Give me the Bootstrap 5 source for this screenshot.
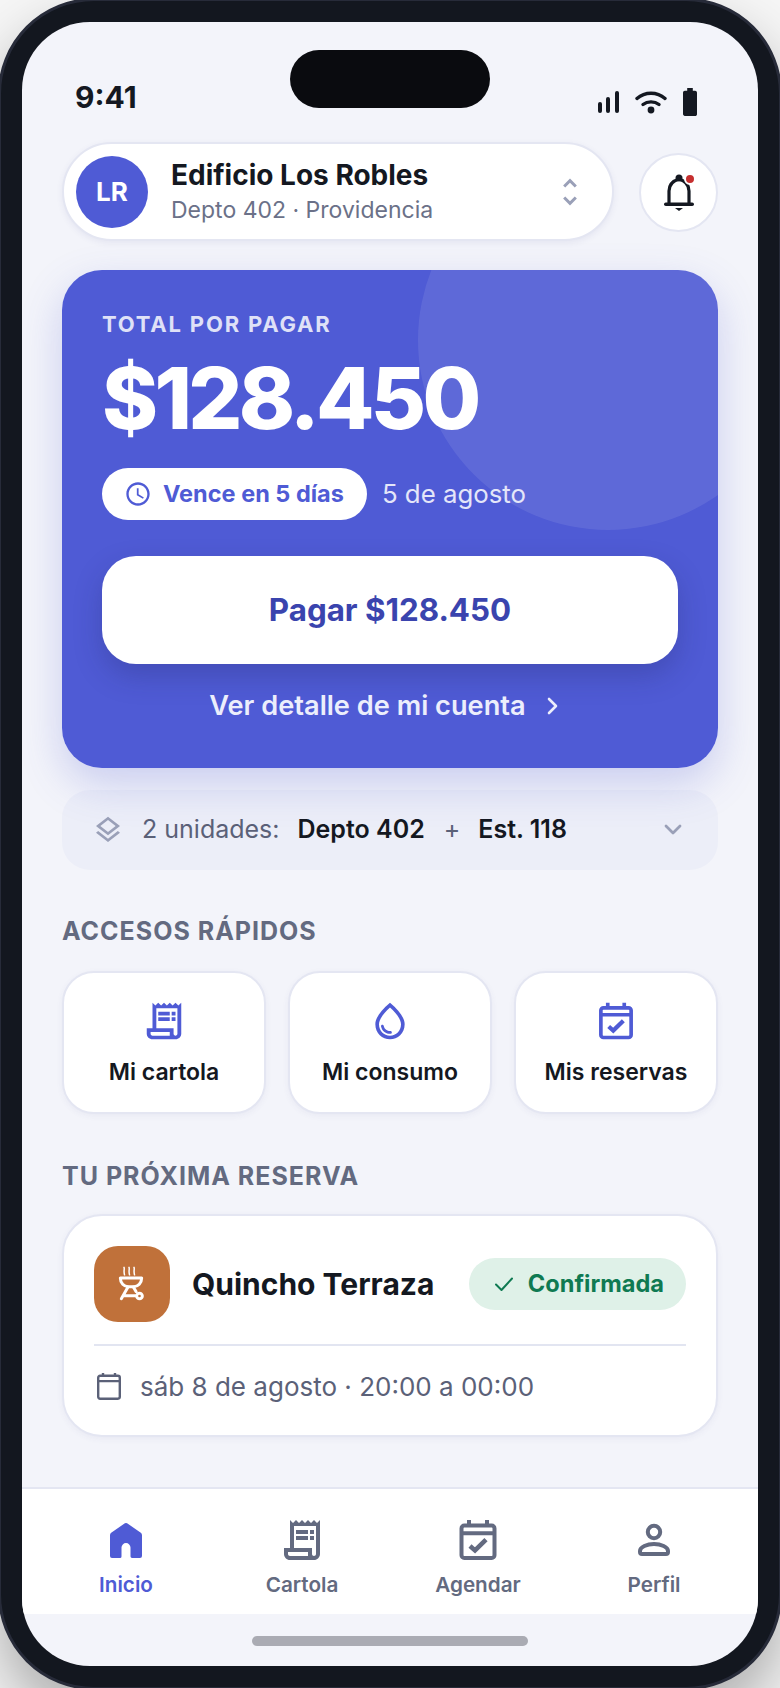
<!DOCTYPE html>
<html lang="es">
<head>
  <meta charset="UTF-8">
  <meta name="viewport" content="width=device-width, initial-scale=1">
  <title>Edificio Los Robles</title>
  <link href="https://cdn.jsdelivr.net/npm/bootstrap@5.3.0/dist/css/bootstrap.min.css" rel="stylesheet">
  <style>
    html, body { margin: 0; height: 1688px; overflow: hidden; background: #f6f6f6; }
    body { font-family: Inter, "Noto Sans", sans-serif; color: #141821; }

    /* marco del telefono */
    .phone-frame { width: 784px; height: 1692px; margin: -2px; padding: 21px; background: #13171f; border: 3px solid #272b39; border-radius: 96px; box-shadow: 0 30px 60px rgba(0,0,0,.3); }
    .phone-screen { position: relative; height: 100%; border-radius: 68px; background: #f3f4fa; overflow: hidden; }
    .island { position: absolute; top: 28px; left: 268px; width: 200px; height: 58px; border-radius: 29px; background: #0a0b0f; }

    .status-row { height: 120px; padding: 57px 61px 0 53px; }
    .status-time { font-size: 30px; line-height: 36px; font-weight: 700; }
    .status-icons { margin-top: 9px; gap: 16px; }

    .page-body { padding: 0 40px; }

    /* selector de edificio */
    .building-pill { height: 99px; padding: 0 24px 0 12px; background: #fff; border: 2px solid #e4e6f2; border-radius: 50px; box-shadow: 0 2px 6px rgba(60,70,140,.08); }
    .avatar-lr { width: 72px; height: 72px; margin-right: 23px; border-radius: 50%; background: #4f5bd5; color: #fff; font-size: 26px; font-weight: 700; }
    .building-name { font-size: 28px; line-height: 34px; font-weight: 700; }
    .building-sub { margin-top: 2px; font-size: 23px; line-height: 32px; color: #6b7188; }
    .bell-btn { position: relative; width: 79px; height: 79px; margin-left: 25px; margin-top: 11px; background: #fff; border: 2px solid #e4e6f2; border-radius: 50%; }
    .bell-dot { position: absolute; top: 18px; right: 20px; width: 8px; height: 8px; border-radius: 50%; background: #c62f2f; box-sizing: content-box; border: 2px solid #fff; }

    /* tarjeta total */
    .total-card { position: relative; margin-top: 29px; padding: 41px 40px 45px; overflow: visible; background: #4f5bd5; color: #fff; border: 0; border-radius: 40px; box-shadow: 0 16px 40px rgba(79,91,213,.25); }
    .total-clip { position: absolute; inset: 0; border-radius: 40px; overflow: hidden; }
    .total-circle { position: absolute; top: -120px; right: -80px; width: 380px; height: 380px; border-radius: 50%; background: rgba(255,255,255,.09); }
    .total-inner { position: relative; }
    .total-label { font-size: 22px; line-height: 26px; font-weight: 700; letter-spacing: 1.8px; color: #dfe1f7; }
    .total-amount { margin-top: 17px; font-size: 85px; line-height: 90px; font-weight: 800; letter-spacing: -3.7px; }
    .due-pill { height: 52px; padding: 0 23px 0 22px; background: #fff; color: #4f5bd5; font-size: 23.5px; font-weight: 700; border-radius: 26px; gap: 11px; }
    .due-date { margin-left: 15px; font-size: 25.8px; color: #e4e6f9; }
    .pay-btn { display: block; width: 100%; height: 108px; margin-top: 36px; background: #fff; color: #3a44ae; font-size: 31.3px; font-weight: 700; border: 0; border-radius: 34px; box-shadow: 0 12px 28px rgba(30,35,90,.25); }
    .pay-btn:hover { background: #fff; color: #3a44ae; }
    .detail-link { margin-top: 25px; height: 34px; padding-right: 11px; gap: 20px; font-size: 27.2px; font-weight: 600; color: #eceefc; text-decoration: none; }

    /* unidades */
    .units-bar { height: 80px; margin-top: 22px; padding: 0 35px 0 30px; background: #eceef8; border-radius: 28px; font-size: 25px; color: #5b6178; }
    .units-bar b { font-weight: 600; color: #141821; }
    .unit-count { margin-left: 18px; }
    .unit-main { margin-left: 18px; }
    .unit-plus { margin: 0 18px 0 19px; }

    .block-title { margin: 46px 0 25px; font-size: 25px; line-height: 30px; font-weight: 700; letter-spacing: 1px; color: #636a80; }
    .block-title.next { margin: 47px 0 23px; }

    /* accesos */
    .quick-row { gap: 22px; }
    .quick-item { flex: 1 1 0; padding: 26px 0 25px; align-items: center; background: #fff; border: 2px solid #e4e6f2; border-radius: 32px; box-shadow: 0 2px 6px rgba(60,70,140,.06); }
    .quick-item span { margin-top: 14px; font-size: 23px; line-height: 30px; font-weight: 600; }

    /* reserva */
    .booking-card { padding: 30px 30px 32px; background: #fff; border: 2px solid #e4e6f2; border-radius: 40px; box-shadow: 0 2px 6px rgba(60,70,140,.06); }
    .grill-box { width: 76px; height: 76px; border-radius: 24px; background: #c0713a; }
    .booking-name { margin-left: 22px; font-size: 30px; font-weight: 700; }
    .booking-state { height: 52px; padding: 0 22px 0 25px; gap: 14px; background: #dff1e8; color: #0f7a52; font-size: 23.6px; font-weight: 700; border-radius: 26px; }
    .booking-line { height: 2px; margin: 22px 0 25px; background: #e2e5f1; }
    .booking-date { gap: 15px; font-size: 26px; line-height: 32px; color: #5b6178; }

    /* barra inferior */
    .tab-bar { height: 127px; padding: 27px 16px 0; background: #fff; border-top: 2px solid #e4e6f2; }
    .tab-item { flex: 1 1 0; gap: 8px; align-items: center; font-size: 20.7px; line-height: 26px; font-weight: 600; color: #636a80; text-decoration: none; }
    .tab-item.on { color: #4f5bd5; }
    .home-zone { height: 52px; padding-top: 22px; }
    .home-bar { width: 276px; height: 10px; border-radius: 5px; background: #aaabb3; }

    .fg-brand { fill: #4f5bd5; }
    .fg-gray { fill: #636a80; }
    .fg-soft { fill: #9aa0b8; }
    .fg-dark { fill: #141821; }
  </style>
</head>
<body>

  <div class="phone-frame">
    <div class="phone-screen d-flex flex-column">
      <div class="island"></div>

      <!-- Barra de estado -->
      <div class="status-row d-flex justify-content-between align-items-start">
        <div class="status-time">9:41</div>
        <div class="status-icons d-flex align-items-center">
          <svg width="21" height="22" viewBox="0 0 21 22"><rect x="0" y="11" width="4" height="11" rx="2" class="fg-dark"/><rect x="8" y="6" width="4" height="16" rx="2" class="fg-dark"/><rect x="17" y="0" width="4" height="22" rx="2" class="fg-dark"/></svg>
          <svg width="32" height="24" viewBox="0 0 32 24" fill="none" stroke="#141821" stroke-width="3.4" stroke-linecap="round"><path d="M2 8.500C10 1.500 22 1.500 30 8.500"/><path d="M8 14.500C12.500 11 19.500 11 24 14.500"/><circle cx="16" cy="20" r="3.400" fill="#141821" stroke="none"/></svg>
          <svg width="14" height="28" viewBox="7 2 10 20" preserveAspectRatio="none"><path class="fg-dark" d="M15.67 4H14V2h-4v2H8.33C7.6 4 7 4.6 7 5.33v15.33C7 21.4 7.6 22 8.33 22h7.33c.74 0 1.34-.6 1.34-1.33V5.33C17 4.6 16.4 4 15.67 4z"/></svg>
        </div>
      </div>

      <div class="page-body">
        <!-- Selector de edificio -->
        <div class="d-flex align-items-start">
          <div class="building-pill flex-grow-1 d-flex align-items-center">
            <div class="avatar-lr d-flex align-items-center justify-content-center">LR</div>
            <div class="flex-grow-1">
              <div class="building-name">Edificio Los Robles</div>
              <div class="building-sub">Depto 402 · Providencia</div>
            </div>
            <svg width="36" height="36" viewBox="0 0 24 24"><path class="fg-soft" d="M12 5.83L15.17 9l1.41-1.41L12 3 7.41 7.59 8.83 9 12 5.83zm0 12.34L8.83 15l-1.42 1.41L12 21l4.59-4.59L15.17 15 12 18.17z"/></svg>
          </div>
          <div class="bell-btn d-flex align-items-center justify-content-center flex-shrink-0">
            <svg width="30" height="37" viewBox="0 0 30 37"><path d="M5 29V17c0-6 3.500-10 10-12 6.500 2 10 6 10 12v12" fill="none" stroke="#141821" stroke-width="3.200"/><circle cx="15" cy="4" r="3.500" class="fg-dark"/><rect x="0" y="28.500" width="30" height="3.600" rx="1.800" class="fg-dark"/><path class="fg-dark" d="M11 34h8l-4 3z"/></svg>
            <span class="bell-dot"></span>
          </div>
        </div>

        <!-- Total por pagar -->
        <div class="card total-card">
          <div class="total-clip"><div class="total-circle"></div></div>
          <div class="total-inner">
            <div class="total-label">TOTAL POR PAGAR</div>
            <div class="total-amount">$128.450</div>
            <div class="d-flex align-items-center mt-4">
              <div class="due-pill d-inline-flex align-items-center">
                <svg width="28" height="28" viewBox="0 0 24 24"><path class="fg-brand" d="M11.99 2C6.47 2 2 6.48 2 12s4.47 10 9.99 10C17.52 22 22 17.52 22 12S17.52 2 11.99 2zM12 20c-4.42 0-8-3.58-8-8s3.58-8 8-8 8 3.58 8 8-3.58 8-8 8zm.5-13H11v6l5.25 3.15.75-1.23-4.5-2.67z"/></svg>
                Vence en 5 días
              </div>
              <div class="due-date">5 de agosto</div>
            </div>
            <button type="button" class="btn pay-btn">Pagar $128.450</button>
            <a href="#" class="detail-link d-flex align-items-center justify-content-center">
              Ver detalle de mi cuenta
              <svg width="14" height="20" viewBox="0 0 14 20" fill="none" stroke="#eceefc" stroke-width="2.6" stroke-linecap="round" stroke-linejoin="round"><path d="M3 3l7 7-7 7"/></svg>
            </a>
          </div>
        </div>

        <!-- Unidades -->
        <div class="units-bar d-flex align-items-center">
          <svg width="32" height="32" viewBox="0 0 24 24"><path class="fg-soft" d="M11.99 18.54l-7.37-5.73L3 14.07l9 7 9-7-1.63-1.27-7.38 5.74zM12 16l7.36-5.73L21 9l-9-7-9 7 1.63 1.27L12 16zm0-11.47L17.74 9 12 13.47 6.26 9 12 4.53z"/></svg>
          <span class="unit-count">2 unidades:</span>
          <b class="unit-main">Depto 402</b>
          <span class="unit-plus">+</span>
          <b>Est. 118</b>
          <svg class="ms-auto" width="20" height="12" viewBox="0 0 20 12" fill="none" stroke="#9aa0b8" stroke-width="2.8" stroke-linecap="round" stroke-linejoin="round"><path d="M3 2l7 7 7-7"/></svg>
        </div>

        <div class="block-title">ACCESOS RÁPIDOS</div>
        <div class="quick-row d-flex">
          <a class="quick-item d-flex flex-column text-decoration-none text-reset" href="#">
            <svg width="46" height="44" viewBox="0 0 24 24" preserveAspectRatio="none"><path class="fg-brand" d="M19.5 3.5L18 2l-1.5 1.5L15 2l-1.5 1.5L12 2l-1.5 1.5L9 2L7.5 3.5L6 2v14H3v3c0 1.66 1.34 3 3 3h12c1.66 0 3-1.34 3-3V2l-1.5 1.5zM15 20H6c-.55 0-1-.45-1-1v-1h10v2zm4-1c0 .55-.45 1-1 1s-1-.45-1-1v-3H8V5h11v14z"/><path class="fg-brand" d="M9 7h6v2H9zM16 7h2v2h-2zM9 10h6v2H9zM16 10h2v2h-2z"/></svg>
            <span>Mi cartola</span>
          </a>
          <a class="quick-item d-flex flex-column text-decoration-none text-reset" href="#">
            <svg width="44" height="44" viewBox="0 0 24 24"><path class="fg-brand" d="M12 2c-5.33 4.55-8 8.48-8 11.8 0 4.98 3.8 8.2 8 8.2s8-3.22 8-8.2c0-3.32-2.67-7.25-8-11.8zm0 18c-3.35 0-6-2.57-6-6.2 0-2.34 1.95-5.44 6-9.14 4.05 3.7 6 6.79 6 9.14 0 3.63-2.65 6.2-6 6.2zm-4.17-6c.37 0 .67.26.74.62.41 2.22 2.28 2.98 3.64 2.87.43-.02.79.32.79.75 0 .4-.32.73-.72.75-2.13.13-4.62-1.09-5.19-4.12-.08-.45.28-.87.74-.87z"/></svg>
            <span>Mi consumo</span>
          </a>
          <a class="quick-item d-flex flex-column text-decoration-none text-reset" href="#">
            <svg width="44" height="44" viewBox="0 0 24 24" fill="none" stroke="#4f5bd5" stroke-width="2"><rect x="3.750" y="4.800" width="16.500" height="16.200" rx="1.400"/><path d="M3.750 8.600h16.500M7.500 5V2M16.500 5V2"/><path stroke-width="2.300" d="M8 15l2.500 2.200L16 11.800"/></svg>
            <span>Mis reservas</span>
          </a>
        </div>

        <div class="block-title next">TU PRÓXIMA RESERVA</div>
        <div class="booking-card">
          <div class="d-flex align-items-center">
            <div class="grill-box d-flex align-items-center justify-content-center flex-shrink-0">
              <svg width="40" height="40" viewBox="0 0 24 24" fill="none" stroke="#fff" stroke-width="1.800" stroke-linecap="round" stroke-linejoin="round">
                <path stroke-width=".9" d="M7.200 2c.5 1.100-.4 1.800.3 4.500M10.200 2c.5 1.100-.4 1.800.3 4.500M13.200 2c.5 1.100-.4 1.800.3 4.500"/>
                <path d="M5 8.400h12.800c0 3-2.200 5.200-4.800 5.200h-3.200c-2.600 0-4.800-2.200-4.800-5.200z"/>
                <path d="M9.600 13.800L5.600 20.800M7 19h7M12.800 13.800l1.700 2.800"/>
                <circle cx="16.500" cy="19.200" r="1.700"/>
              </svg>
            </div>
            <div class="booking-name">Quincho Terraza</div>
            <div class="booking-state d-flex align-items-center ms-auto">
              <svg width="20" height="16" viewBox="0 0 20 16" fill="none" stroke="#0f7a52" stroke-width="2" stroke-linecap="round" stroke-linejoin="round"><path d="M2 8.500l5.500 5.500L18 2.500"/></svg>
              Confirmada
            </div>
          </div>
          <div class="booking-line"></div>
          <div class="booking-date d-flex align-items-center">
            <svg width="32" height="32" viewBox="0 0 24 24" fill="none" stroke="#5b6178" stroke-width="1.800" style="margin-left:-1px"><rect x="3.900" y="3.600" width="16.200" height="17.200" rx="1.400"/><path d="M3.900 7.600h16.200M7.500 3.600V1.500M16.500 3.600V1.500"/></svg>
            sáb 8 de agosto · 20:00 a 00:00
          </div>
        </div>
      </div>

      <!-- Barra inferior -->
      <div class="mt-auto">
        <nav class="tab-bar d-flex">
          <a class="tab-item on d-flex flex-column" href="#">
            <svg width="48" height="48" viewBox="0 0 24 24"><path class="fg-brand" d="M10.900 4a1.600 1.600 0 0 1 2.200 0L19.400 8.400c.4.3.6.7.6 1.200V20a1 1 0 0 1-1 1h-4a.8.8 0 0 1-.75-.75V15.800a2.250 2.250 0 0 0-4.500 0v4.450a.75.75 0 0 1-.75.75H5a1 1 0 0 1-1-1V9.600c0-.5.2-.9.6-1.200z"/></svg>
            Inicio
          </a>
          <a class="tab-item d-flex flex-column" href="#">
            <svg width="48" height="48" viewBox="0 0 24 24"><path class="fg-gray" d="M19.500 3.500L18 2l-1.500 1.500L15 2l-1.500 1.500L12 2l-1.500 1.500L9 2L7.500 3.500L6 2v14H3v3c0 1.660 1.340 3 3 3h12c1.660 0 3-1.340 3-3V2l-1.500 1.500zM15 20H6c-.55 0-1-.45-1-1v-1h10v2zm4-1c0 .55-.45 1-1 1s-1-.45-1-1v-3H8V5h11v14z"/><path class="fg-gray" d="M9 7h6v2H9zM16 7h2v2h-2zM9 10h6v2H9zM16 10h2v2h-2z"/></svg>
            Cartola
          </a>
          <a class="tab-item d-flex flex-column" href="#">
            <svg width="48" height="48" viewBox="0 0 24 24" fill="none" stroke="#636a80" stroke-width="2"><rect x="3.750" y="4.800" width="16.500" height="16.200" rx="1.400"/><path d="M3.750 8.600h16.500M7.500 5V2M16.500 5V2"/><path stroke-width="2.300" d="M8 15l2.500 2.200L16 11.800"/></svg>
            Agendar
          </a>
          <a class="tab-item d-flex flex-column" href="#">
            <svg width="48" height="48" viewBox="0 0 24 24" fill="none" stroke="#636a80" stroke-width="2"><circle cx="12" cy="8" r="3.100"/><path d="M5 17.500c0-2 3.500-3.500 7-3.500s7 1.500 7 3.500v.5c0 .55-.45 1-1 1H6c-.55 0-1-.45-1-1z"/></svg>
            Perfil
          </a>
        </nav>
        <div class="home-zone d-flex justify-content-center">
          <div class="home-bar"></div>
        </div>
      </div>
    </div>
  </div>

  <script src="https://cdn.jsdelivr.net/npm/bootstrap@5.3.0/dist/js/bootstrap.bundle.min.js"></script>
</body>
</html>
